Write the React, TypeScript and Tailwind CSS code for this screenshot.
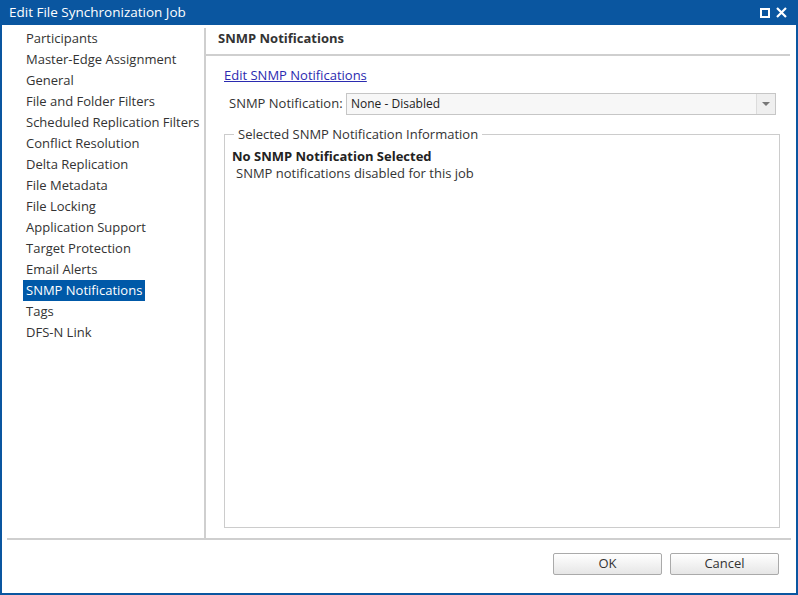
const items = [
  "Participants",
  "Master-Edge Assignment",
  "General",
  "File and Folder Filters",
  "Scheduled Replication Filters",
  "Conflict Resolution",
  "Delta Replication",
  "File Metadata",
  "File Locking",
  "Application Support",
  "Target Protection",
  "Email Alerts",
  "SNMP Notifications",
  "Tags",
  "DFS-N Link",
];

export default function App() {
  return (
    <div className="w-[798px] h-[595px] bg-[#0a56a0] p-[2px] pt-0 flex flex-col text-[13px] text-[#333]" style={{ fontFamily: '"Open Sans", "DejaVu Sans", sans-serif' }}>
      <div className="h-[25px] flex items-center justify-between px-[7px] text-white text-[13.5px]">
        <span>Edit File Synchronization Job</span>
        <div className="flex items-center gap-[6px] pr-[2px]">
          <div className="w-[10px] h-[10px] border-2 border-white" />
          <svg width="11" height="11" viewBox="0 0 11 11"><path d="M1 1L10 10M10 1L1 10" stroke="white" strokeWidth="2.2" /></svg>
        </div>
      </div>
      <div className="flex-1 bg-white flex flex-col">
        <div className="flex h-[513px] pt-[3px]">
          <div className="w-[204px] shrink-0 border-r-2 border-[#cfcfcf] pl-[21px]">
            {items.map((it) => (
              <div key={it} className={`h-[21px] leading-[21px] px-[3px] w-fit ${it === "SNMP Notifications" ? "bg-[#0059a8] text-white" : ""}`}>
                {it}
              </div>
            ))}
          </div>
          <div className="flex-1 flex flex-col pr-[6px]">
            <div className="h-[28px] border-b-2 border-[#cfcfcf] pl-[12px] pt-[1px] font-bold text-[#333]">SNMP Notifications</div>
            <div className="pl-[18px] pr-[10px] flex-1 flex flex-col pb-[10px]">
              <a className="mt-[9px] underline text-[#2b2bb0] leading-[20px] w-fit">Edit SNMP Notifications</a>
              <div className="flex items-center mt-[8px] h-[22px] mr-[4px]">
                <span className="pl-[5px] w-[122px]">SNMP Notification:</span>
                <div className="flex-1 h-[22px] border border-[#c6c6c6] bg-[#f7f7f7] flex items-center justify-between pl-[4px] text-[12px] text-[#222]">
                  <span>None - Disabled</span>
                  <div className="w-[19px] h-full border-l border-[#dcdcdc] bg-[#efefef] flex items-center justify-center">
                    <div className="w-0 h-0 border-l-[4px] border-r-[4px] border-t-[4px] border-l-transparent border-r-transparent border-t-[#777]" />
                  </div>
                </div>
              </div>
              <div className="relative mt-[19px] flex-1 border border-[#cccccc] pt-[13px] pl-[7px]">
                <span className="absolute -top-[9px] left-[9px] bg-white px-[4px] leading-[16px]">Selected SNMP Notification Information</span>
                <div className="font-bold text-[#222] leading-[17px]">No SNMP Notification Selected</div>
                <div className="pl-[4px] leading-[17px]">SNMP notifications disabled for this job</div>
              </div>
            </div>
          </div>
        </div>
        <div className="mx-[5px] border-t-2 border-[#cfcfcf]" />
        <div className="flex justify-end gap-[8px] pr-[17px] pt-[13px]">
          <button className="w-[109px] h-[22px] border border-[#aaa] rounded-[2px] bg-gradient-to-b from-white to-[#e6e6e6] text-[#333]">OK</button>
          <button className="w-[109px] h-[22px] border border-[#aaa] rounded-[2px] bg-gradient-to-b from-white to-[#e6e6e6] text-[#333]">Cancel</button>
        </div>
      </div>
    </div>
  );
}
